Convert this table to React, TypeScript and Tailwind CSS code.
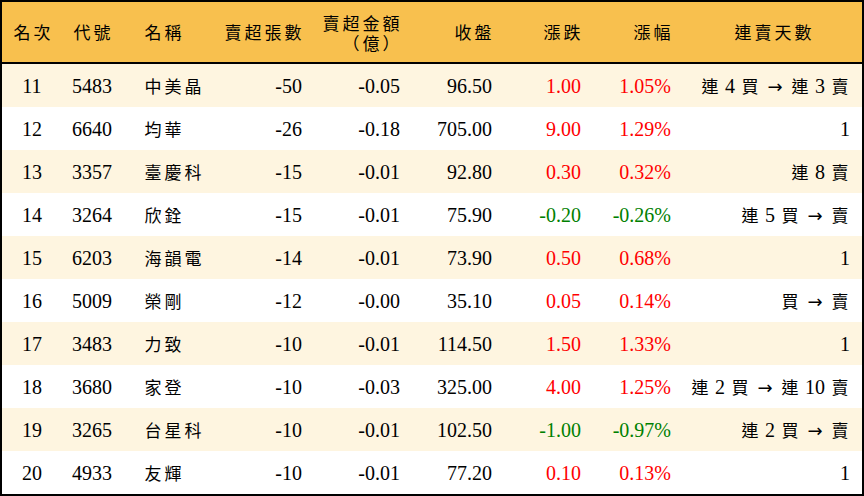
const rows = [
  { rank: 11, code: "5483", name: "中美晶", qty: "-50", amt: "-0.05", close: "96.50", chg: "1.00", pct: "1.05%", days: "連 4 買 → 連 3 賣" },
  { rank: 12, code: "6640", name: "均華", qty: "-26", amt: "-0.18", close: "705.00", chg: "9.00", pct: "1.29%", days: "1" },
  { rank: 13, code: "3357", name: "臺慶科", qty: "-15", amt: "-0.01", close: "92.80", chg: "0.30", pct: "0.32%", days: "連 8 賣" },
  { rank: 14, code: "3264", name: "欣銓", qty: "-15", amt: "-0.01", close: "75.90", chg: "-0.20", pct: "-0.26%", days: "連 5 買 → 賣" },
  { rank: 15, code: "6203", name: "海韻電", qty: "-14", amt: "-0.01", close: "73.90", chg: "0.50", pct: "0.68%", days: "1" },
  { rank: 16, code: "5009", name: "榮剛", qty: "-12", amt: "-0.00", close: "35.10", chg: "0.05", pct: "0.14%", days: "買 → 賣" },
  { rank: 17, code: "3483", name: "力致", qty: "-10", amt: "-0.01", close: "114.50", chg: "1.50", pct: "1.33%", days: "1" },
  { rank: 18, code: "3680", name: "家登", qty: "-10", amt: "-0.03", close: "325.00", chg: "4.00", pct: "1.25%", days: "連 2 買 → 連 10 賣" },
  { rank: 19, code: "3265", name: "台星科", qty: "-10", amt: "-0.01", close: "102.50", chg: "-1.00", pct: "-0.97%", days: "連 2 買 → 賣" },
  { rank: 20, code: "4933", name: "友輝", qty: "-10", amt: "-0.01", close: "77.20", chg: "0.10", pct: "0.13%", days: "1" },
];

const grid = "grid grid-cols-[60px_60px_93px_100px_98px_92px_89px_90px_178px]";

// CJK glyphs drawn a bit smaller in 20px cells, like the kai font in the original
function Zh({ text }: { text: string }) {
  const parts = text.split(/([\u4e00-\u9fff（）]|→)/);
  return (
    <>
      {parts.map((p, i) => {
        if (!p) return null;
        if (p === "→")
          return (
            <span key={i} className="inline-block w-[20px] leading-[18px] text-center font-['DejaVu_Sans',sans-serif] text-[18px]">
              →
            </span>
          );
        if (/[\u4e00-\u9fff（）]/.test(p))
          return (
            <span key={i} className="inline-block w-[20px] leading-[18px] text-center font-['Noto_Sans_CJK_TC',sans-serif] text-[17px]">
              {p}
            </span>
          );
        return <span key={i} className="whitespace-pre">{p}</span>;
      })}
    </>
  );
}

export default function App() {
  return (
    <div className="w-[864px] h-[496px] bg-white border-2 border-black font-['Liberation_Serif','Noto_Sans_CJK_TC',serif] text-[20px] text-black">
      {/* header */}
      <div className={`${grid} h-[62px] bg-[#f8c04e] border-b-2 border-black items-center leading-[20px]`}>
        <div className="text-center"><Zh text="名次" /></div>
        <div className="text-center"><Zh text="代號" /></div>
        <div className="pl-[21px]"><Zh text="名稱" /></div>
        <div className="text-right pr-[12px]"><Zh text="賣超張數" /></div>
        <div className="text-right pr-[12px] flex flex-col gap-[2px]">
          <div className="h-[18px]"><Zh text="賣超金額" /></div>
          <div className="h-[18px]"><Zh text="（億）" /></div>
        </div>
        <div className="text-right pr-[12px]"><Zh text="收盤" /></div>
        <div className="text-right pr-[12px]"><Zh text="漲跌" /></div>
        <div className="text-right pr-[12px]"><Zh text="漲幅" /></div>
        <div className="text-center"><Zh text="連賣天數" /></div>
      </div>

      {rows.map((r, i) => {
        const up = !r.chg.startsWith("-");
        const color = up ? "text-[#ff0000]" : "text-[#008000]";
        return (
          <div
            key={r.rank}
            className={`${grid} h-[43px] items-center ${i % 2 === 0 ? "bg-[#fef5e0]" : "bg-white"}`}
          >
            <div className="text-center">{r.rank}</div>
            <div className="text-center">{r.code}</div>
            <div className="pl-[21px]"><Zh text={r.name} /></div>
            <div className="text-right pr-[13px]">{r.qty}</div>
            <div className="text-right pr-[13px]">{r.amt}</div>
            <div className="text-right pr-[13px]">{r.close}</div>
            <div className={`text-right pr-[13px] ${color}`}>{r.chg}</div>
            <div className={`text-right pr-[13px] ${color}`}>{r.pct}</div>
            <div className="text-right pr-[12px] whitespace-nowrap"><Zh text={r.days} /></div>
          </div>
        );
      })}
    </div>
  );
}
